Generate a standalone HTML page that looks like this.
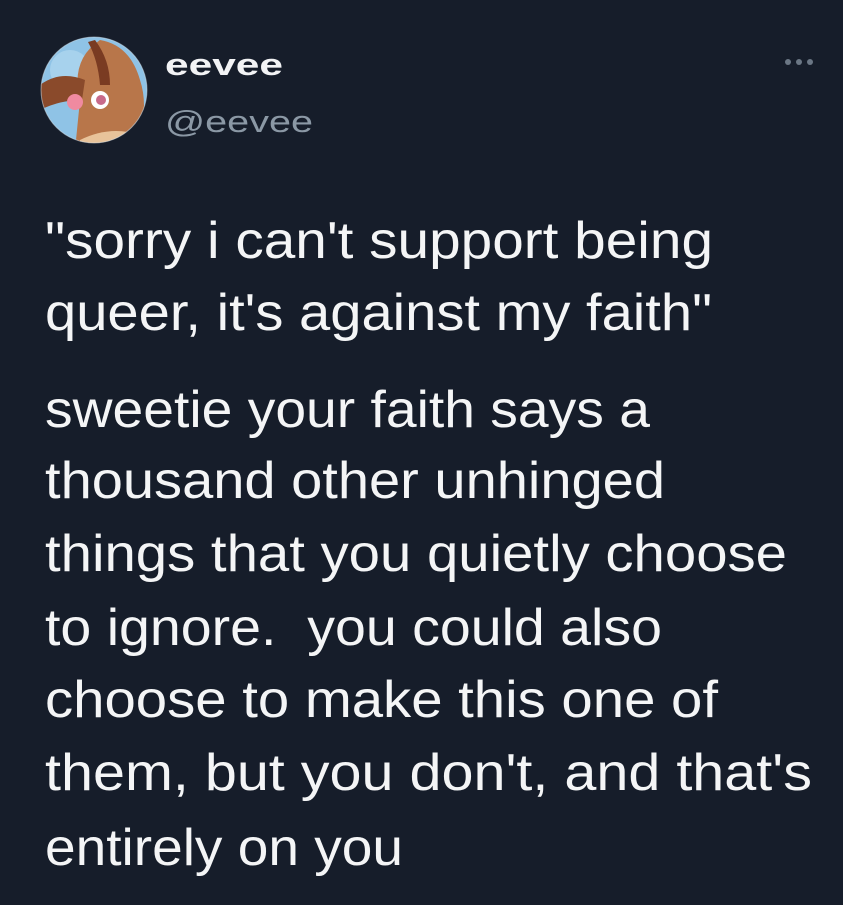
<!DOCTYPE html>
<html><head><meta charset="utf-8"><style>
html,body{margin:0;padding:0;background:#161d2a;}
svg{display:block}
</style></head><body>
<svg width="843" height="905" viewBox="0 0 843 905" xmlns="http://www.w3.org/2000/svg">
<rect width="843" height="905" fill="#161d2a"/>
<defs><clipPath id="c"><circle cx="94" cy="90" r="53"/></clipPath></defs>
<g clip-path="url(#c)">
<rect x="40" y="36" width="110" height="110" fill="#8fc3e6"/>
<circle cx="70" cy="70" r="20" fill="#b7dcf2" opacity=".6"/>
<path d="M75 150 L80 100 Q70 60 100 40 Q130 45 140 80 Q150 110 135 150 Z" fill="#b8764a"/>
<path d="M95 40 Q110 60 110 85 L100 85 Q98 60 88 42 Z" fill="#7a3b22"/>
<path d="M40 85 Q60 70 85 80 L82 100 Q60 100 40 110 Z" fill="#8a4a2b"/>
<circle cx="100" cy="100" r="9" fill="#fff"/>
<circle cx="101" cy="100" r="5" fill="#c86a8a"/>
<circle cx="75" cy="102" r="8" fill="#f08aa0"/>
<path d="M80 140 Q110 125 140 135 L140 150 L80 150 Z" fill="#e8c39a"/>
</g>
<circle cx="94" cy="90" r="53" fill="none" stroke="#d9e6ee" stroke-width="1" opacity=".5"/>
<g font-family="Liberation Sans, Arial, sans-serif">
<text x="165" y="75" font-size="31" font-weight="700" fill="#f2f3f5" textLength="118" lengthAdjust="spacingAndGlyphs">eevee</text>
<text x="165" y="132" font-size="31" fill="#8b98a5" textLength="148" lengthAdjust="spacingAndGlyphs">@eevee</text>
<circle cx="788" cy="62" r="3" fill="#6b7785"/>
<circle cx="799" cy="62" r="3" fill="#6b7785"/>
<circle cx="810" cy="62" r="3" fill="#6b7785"/>
<g font-size="52" fill="#f4f5f6">
<text x="45" y="258" textLength="668" lengthAdjust="spacingAndGlyphs">"sorry i can't support being</text>
<text x="45" y="330" textLength="667" lengthAdjust="spacingAndGlyphs">queer, it's against my faith"</text>
<text x="45" y="427" textLength="605" lengthAdjust="spacingAndGlyphs">sweetie your faith says a</text>
<text x="45" y="498" textLength="620" lengthAdjust="spacingAndGlyphs">thousand other unhinged</text>
<text x="45" y="571" textLength="742" lengthAdjust="spacingAndGlyphs">things that you quietly choose</text>
<text x="45" y="645" textLength="617" lengthAdjust="spacingAndGlyphs">to ignore.&#160; you could also</text>
<text x="45" y="717" textLength="673" lengthAdjust="spacingAndGlyphs">choose to make this one of</text>
<text x="45" y="790" textLength="767" lengthAdjust="spacingAndGlyphs">them, but you don't, and that's</text>
<text x="45" y="865" textLength="358" lengthAdjust="spacingAndGlyphs">entirely on you</text>
</g>
</g>
</svg>
</body></html>
